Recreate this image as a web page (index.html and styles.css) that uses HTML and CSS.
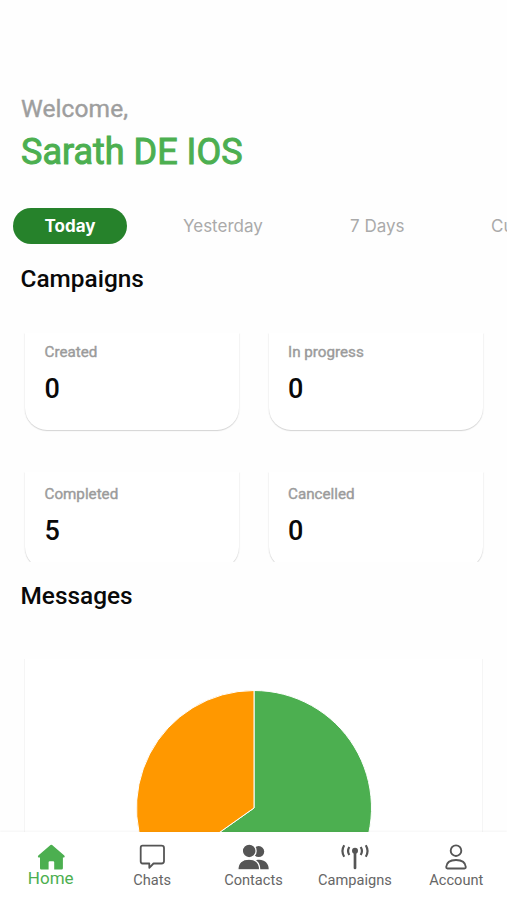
FILE: index.html
```html
<!DOCTYPE html>
<html lang="en">
<head>
<meta charset="utf-8">
<title>Dashboard</title>
<link rel="stylesheet" href="styles.css">
</head>
<body>
<div class="app">
  <header class="greeting">
    <p class="welcome">Welcome,</p>
    <h1 class="name">Sarath DE IOS</h1>
  </header>
  <div class="filters">
    <button class="chip active">Today</button>
    <button class="chip yesterday">Yesterday</button>
    <button class="chip days">7 Days</button>
    <button class="chip custom">Custom</button>
  </div>
  <h2 class="section campaigns-title">Campaigns</h2>
  <section class="grid">
    <div class="cell"><article class="card"><span class="label">Created</span><strong class="value">0</strong></article></div>
    <div class="cell"><article class="card"><span class="label">In progress</span><strong class="value">0</strong></article></div>
    <div class="cell cut"><article class="card"><span class="label">Completed</span><strong class="value">5</strong></article></div>
    <div class="cell cut"><article class="card"><span class="label">Cancelled</span><strong class="value">0</strong></article></div>
  </section>
  <h2 class="section messages-title">Messages</h2>
  <section class="chart">
    <svg class="pie" width="238" height="238" viewBox="-119 -119 238 238">
      <path fill="#4caf50" stroke="#fff" d="M0 0V-117.5A117.5 117.5 0 1 1 -95.9 67.9Z"/>
      <path fill="#ff9800" stroke="#fff" d="M0 0L-95.9 67.9A117.5 117.5 0 0 1 0 -117.5Z"/>
    </svg>
  </section>
  <nav class="tabs">
    <a class="tab current">
      <svg width="30" height="28" viewBox="0 0 30 28"><path fill="#4caf50" d="M14.500 1.100Q15.300 .500 16.100 1.100L28.300 11.500Q29.500 13.300 27.900 13.600H26.900V24.200Q26.900 25.500 25.600 25.500H18.200V18.300Q18.200 17.200 17.100 17.200H13.700Q12.600 17.200 12.600 18.300V25.500H5.300Q4 25.500 4 24.200V13.600H2.700Q1.100 13.300 2.300 11.500Z"/></svg>
      <span>Home</span>
    </a>
    <a class="tab">
      <svg width="30" height="28" viewBox="0 0 30 28"><path fill="none" stroke="#555" stroke-width="1.800" stroke-linejoin="round" d="M5.500 1.700H24.500Q27 1.700 27 4V17.300Q27 19.500 24.500 19.500H16.500L12.300 23.800V19.500H5.500Q3.700 19.500 3.700 17.300V4Q3.700 1.700 5.500 1.700Z"/></svg>
      <span>Chats</span>
    </a>
    <a class="tab">
      <svg width="34" height="28" viewBox="0 0 34 28"><g fill="#555"><circle cx="22.700" cy="7.600" r="5.500"/><path d="M20 16.300C27 14.500 32.700 18.500 32.700 25.200H20Z"/><g stroke="#fff" stroke-width="1.300"><circle cx="13.200" cy="6.900" r="6.900"/><path d="M1.800 25.800C1.800 18.500 6 15.200 13 15.200S23.700 18.500 23.700 25.800Z"/></g></g></svg>
      <span>Contacts</span>
    </a>
    <a class="tab">
      <svg width="30" height="28" viewBox="0 0 30 28"><circle cx="15" cy="6.800" r="3" fill="#555"/><path fill="none" stroke="#555" stroke-width="2.700" stroke-linecap="round" d="M15 8V24"/><path fill="none" stroke="#555" stroke-width="2.200" d="M9.300 3Q6.800 7 9.300 11M20.700 3Q23.200 7 20.700 11M4.200 1.200Q.700 7 4.200 12.800M25.800 1.200Q29.300 7 25.800 12.800"/></svg>
      <span>Campaigns</span>
    </a>
    <a class="tab">
      <svg width="30" height="28" viewBox="0 0 30 28"><g fill="none" stroke="#555" stroke-width="1.900"><circle cx="15" cy="6.700" r="5.300"/><path stroke-linejoin="round" d="M6.500 24.500Q5.200 24.500 5.200 23Q5.800 16 15 16T24.800 23Q24.800 24.500 23.500 24.500Z"/></g></svg>
      <span>Account</span>
    </a>
  </nav>
</div>
</body>
</html>
```
FILE: styles.css
```css
* { box-sizing: border-box; }
body { margin: 0; font-family: Roboto, "Liberation Sans", sans-serif; background: #fefefe; color: #090909; }
.app { width: 507px; height: 900px; overflow: hidden; display: flex; flex-direction: column; }
.app > * { flex-shrink: 0; }
.greeting { padding: 94px 21px 0; height: 208px; }
.welcome { margin: 0; font-size: 24.5px; line-height: 30px; color: #9e9e9e; -webkit-text-stroke: .4px; letter-spacing: .1px; }
.name { margin: 7px 0 0; font-size: 36px; line-height: 42px; font-weight: 400; color: #4caf50; -webkit-text-stroke: 1px; }
.filters { height: 37px; padding-left: 13px; display: flex; white-space: nowrap; overflow: hidden; }
.chip { flex: none; border: 0; padding: 0; background: none; height: 36px; font: 400 17px/36px Inter, sans-serif; color: #aaa; text-align: left; }
.chip.active { width: 114px; margin-right: 56px; border-radius: 19px; background: #26822b; color: #fff; text-align: center; font-weight: 700; }
.yesterday { width: 167px; }
.days { width: 141px; }
.section { margin: 0; padding-left: 20.5px; font-size: 24.4px; font-weight: 500; line-height: 32px; }
.campaigns-title { height: 88px; padding-top: 18px; }
.grid { display: grid; grid-template-columns: 243.5px 244px; grid-template-rows: 139px 90px; padding-left: 20px; }
.cell { height: 106px; padding: 0 5px; overflow: hidden; }
.cell.cut { height: 90px; }
.cell.cut .card { padding-top: 11px; }
.card { width: 214px; height: 97px; border-radius: 0 0 22px 22px; padding: 8px 19.5px; background: #fff; box-shadow: 0 1px 1px #d4d4d4, 0 0 2px #e8e8e8; display: flex; flex-direction: column; }
.label { font-size: 15.2px; line-height: 22px; color: #9b9b9b; -webkit-text-stroke: .4px; }
.value { margin-top: 9px; font-size: 27px; font-weight: 500; line-height: 34px; }
.messages-title { height: 97px; padding-top: 18px; }
.chart { height: 173px; margin: 0 24px; padding-top: 30px; border: solid #f5f5f5; border-width: 0 1px; overflow: hidden; text-align: center; background: #fff; }
.pie { display: inline-block; }
.tabs { height: 68px; display: grid; grid-template-columns: repeat(5, 1fr); background: #fff; box-shadow: 0 -1px 2px rgba(0,0,0,.04); position: relative; padding-top: 11px; }
.tab { display: flex; flex-direction: column; align-items: center; color: #666; font-size: 14.6px; line-height: 18px; }
.tab svg { display: block; margin-top: 1px; }
.tab span { margin-top: -1px; }
.current { color: #4caf50; font-size: 17px; }
.current span { margin-top: -3px; }
```
